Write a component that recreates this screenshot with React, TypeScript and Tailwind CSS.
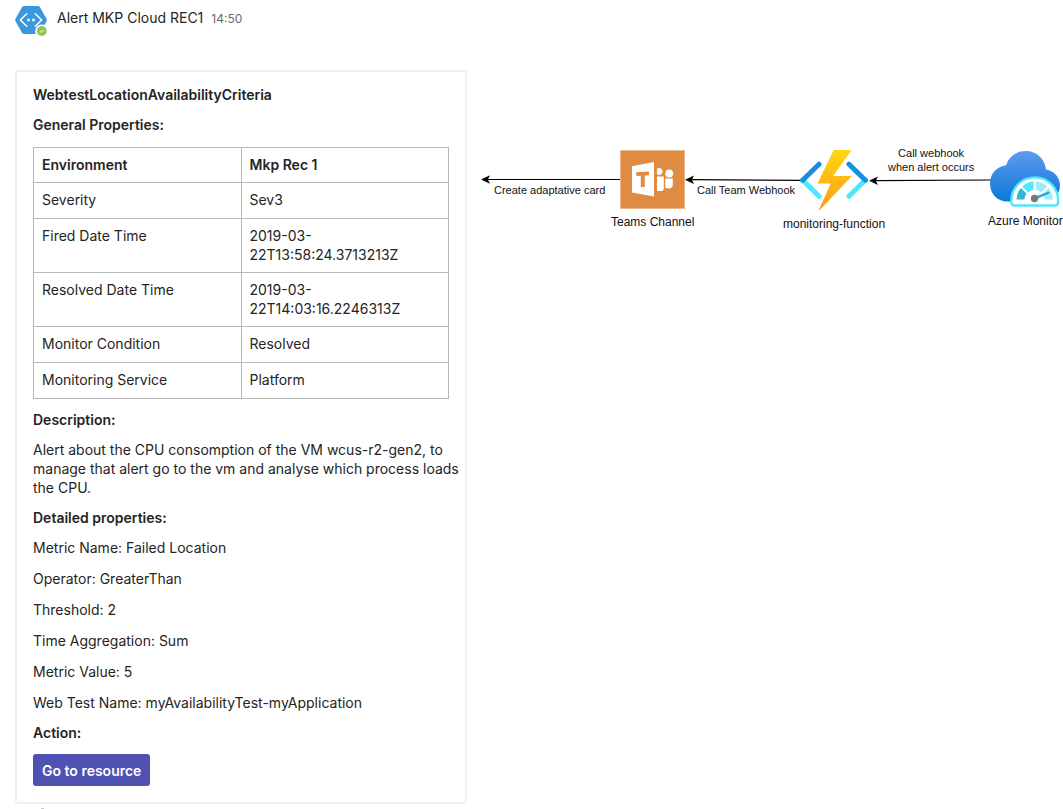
import React from "react";

const properties: [string, string][] = [
  ["Severity", "Sev3"],
  ["Fired Date Time", "2019-03-22T13:58:24.3713213Z"],
  ["Resolved Date Time", "2019-03-22T14:03:16.2246313Z"],
  ["Monitor Condition", "Resolved"],
  ["Monitoring Service", "Platform"],
];

const details: [string, string][] = [
  ["Metric Name", "Failed Location"],
  ["Operator", "GreaterThan"],
  ["Threshold", "2"],
  ["Time Aggregation", "Sum"],
  ["Metric Value", "5"],
  ["Web Test Name", "myAvailabilityTest-myApplication"],
];

function BotAvatar() {
  return (
    <svg className="h-8 w-8 shrink-0" viewBox="0 0 32 32" aria-hidden="true">
      <path
        d="M9 0h14q1.3 0 2 1.2l6.4 11.3q.8 1.5 0 3L25 26.8q-.7 1.2-2 1.2H9q-1.3 0-2-1.2L.6 15.5q-.8-1.5 0-3L7 1.2Q7.7 0 9 0Z"
        fill="#3a96dd"
      />
      <path
        d="M11.7 7.8 5.4 14l6.3 6.2M20.3 7.8l6.3 6.2-6.3 6.2"
        fill="none"
        stroke="#fff"
        strokeWidth="1.5"
        strokeLinecap="round"
      />
      <circle cx="13.5" cy="14" r="1.4" fill="#fff" />
      <circle cx="18.5" cy="14" r="1.4" fill="#fff" />
      <circle cx="26.8" cy="25" r="6.6" fill="#fff" />
      <circle cx="26.8" cy="25" r="4.9" fill="#92c353" />
      <path d="m24.9 25.1 1.3 1.3 2.5-2.6" fill="none" stroke="#fff" strokeWidth="1" />
    </svg>
  );
}

function TeamsIcon() {
  return (
    <svg className="h-[59px] w-[65px]" viewBox="0 0 65 59" aria-hidden="true">
      <rect x=".5" y=".5" width="64" height="58" fill="#df8c42" stroke="#ecb98c" />
      <path d="M12 16.2 34 12v34.5L12 42.4Z" fill="#fff" />
      <path d="M16.3 22.3 29 21.5v3.8l-4.2.2v11.6l-4-.2V25.7l-4.5.2Z" fill="#df8c42" />
      <path d="M37 18.8a3.4 3.4 0 1 1 0 5.4Z" fill="#fff" />
      <circle cx="49.2" cy="23.5" r="3.9" fill="#fff" />
      <path d="M37 26.5h6.8v11.4q0 3.2-3.4 3.2H37Z" fill="#fff" />
      <path d="M45.2 28.5h7.6v6.3q0 3.6-4 3.6-2.3 0-3.6-.6Z" fill="#fff" />
    </svg>
  );
}

function FunctionIcon() {
  return (
    <svg className="h-[60px] w-[68px]" viewBox="0 0 68 60" aria-hidden="true">
      <defs>
        <linearGradient id="bolt" x1="0" y1="0" x2="0" y2="1">
          <stop offset="0" stopColor="#fed70f" />
          <stop offset="1" stopColor="#fe9b1c" />
        </linearGradient>
      </defs>
      <g fill="none" strokeWidth="5" strokeLinejoin="round">
        <path d="M2.6 30 19 46.3M65.4 30 49 46.3" stroke="#50e6ff" strokeLinecap="round" />
        <path d="M19 14.2 2.6 30.2M49 14.2l16.4 16" stroke="#1490df" strokeLinecap="round" />
      </g>
      <path d="M34.4 0h16.2q1 0 .4 1L33 26h17.7q1 0 .3.9L20.2 59.4q-1.5 1.3-.8-.6L30.7 33.5H18.6q-1 0-.6-1L33.5.6q.3-.6.9-.6Z" fill="url(#bolt)" />
    </svg>
  );
}

function MonitorIcon() {
  return (
    <svg className="h-[57px] w-[70px]" viewBox="0 0 70 57" aria-hidden="true">
      <defs>
        <linearGradient id="cloud" x1="0" y1="0" x2="0" y2="1">
          <stop offset="0" stopColor="#5e9bee" />
          <stop offset="1" stopColor="#0b78d7" />
        </linearGradient>
      </defs>
      <path
        d="M18 50.6C7.5 50.6 0 42.6 0 32.4 0 22 6.8 15.8 16.2 14.2 18.6 5.6 26.4 0 35.8 0 46.6 0 55 7.8 56 18.6 64.2 20 70 26.4 70 34.6c0 9.2-7 16-16 16Z"
        fill="url(#cloud)"
      />
      <path
        d="M21.2 50.5C21.2 36.6 31.4 26.4 44.8 26.4s23.5 10.2 23.5 24.1q0 4-3.4 4H24.6q-3.4 0-3.4-4Z"
        fill="#fff"
        stroke="#50e6ff"
        strokeWidth="2.4"
      />
      <path d="M26.6 48.5a18 18 0 0 1 4.3-11.4l5.7 5.6a10 10 0 0 0-2.3 5.8Z" fill="#32b6d5" />
      <path d="M32.3 35.6A18 18 0 0 1 43.6 30.6v8.4a10 10 0 0 0-5.5 2.4Z" fill="#50e6ff" />
      <path d="M45.8 30.6a18 18 0 0 1 11.4 5l-5.9 5.8a10 10 0 0 0-5.5-2.4Z" fill="#9cebff" />
      <path d="M58.5 37.1a18 18 0 0 1 4.3 11.4H55a10 10 0 0 0-2.3-5.8Z" fill="#9cebff" />
      <path d="m44.5 46 14.8-5.6v2l-14 6Z" fill="#1aa4c8" />
      <circle cx="44.5" cy="47.5" r="3.7" fill="#76797c" />
    </svg>
  );
}

function Arrows() {
  return (
    <svg className="absolute left-0 top-[170px] h-5 w-[530px]" viewBox="0 0 530 20" aria-hidden="true">
      <g stroke="#000" strokeWidth="1.2">
        <path d="M19 9.5h135M224 9.7l111 .7M408 10.7l116-.7" />
      </g>
      <path d="m14 9.5 9-4.2-2.2 4.2 2.2 4.2Z" />
      <path d="m218 9.7 9-4.2-2.2 4.2 2.2 4.2Z" />
      <path d="m402 10.7 9-4.2-2.2 4.2 2.2 4.2Z" />
    </svg>
  );
}

function Flow() {
  return (
    <section
      aria-label="Alert flow"
      className="relative flex-1 overflow-hidden whitespace-nowrap text-[#111111]"
      style={{ fontFamily: '"Liberation Sans", Arial, sans-serif' }}
    >
      <Arrows />
      <p className="absolute left-[27px] top-[183px] text-[11px] leading-[14px]">Create adaptative card</p>
      <div className="absolute left-[144px] top-[150px] flex flex-col items-center gap-[5px]">
        <TeamsIcon />
        <p className="text-xs leading-4">Teams Channel</p>
      </div>
      <p className="absolute left-[230px] top-[183px] text-[11px] leading-[14px]">Call Team Webhook</p>
      <div className="absolute left-[316px] top-[150px] flex flex-col items-center gap-[6px]">
        <FunctionIcon />
        <p className="text-xs leading-4">monitoring-function</p>
      </div>
      <p className="absolute left-[421px] top-[146px] text-center text-[11px] leading-[14px]">
        Call webhook
        <br />
        when alert occurs
      </p>
      <div className="absolute left-[521px] top-[151px] flex flex-col items-center gap-[5px]">
        <MonitorIcon />
        <p className="text-xs leading-4">Azure Monitor</p>
      </div>
    </section>
  );
}

export default function App() {
  return (
    <main
      className="flex min-h-screen overflow-hidden bg-white text-sm text-[#252423]"
      style={{ fontFamily: 'Inter, "Liberation Sans", sans-serif' }}
    >
      <article className="ml-[15px] w-[452px] shrink-0 pt-[6px]">
        <header className="flex h-16 items-start gap-[10px]">
          <BotAvatar />
          <div className="flex items-baseline gap-2 pt-[2px]">
            <h1 className="leading-5">Alert MKP Cloud REC1</h1>
            <time className="text-xs text-[#6b6968]">14:50</time>
          </div>
        </header>

        <div className="flex flex-col gap-[11px] rounded-[3px] border-2 border-[#f0f0f0] px-4 pb-4 pt-[13px] leading-[19px]">
          <h2 className="font-semibold">WebtestLocationAvailabilityCriteria</h2>
          <h3 className="font-semibold">General Properties:</h3>
          <table className="mt-[2px] w-full table-fixed border-collapse text-left [&_td]:border [&_td]:border-[#b8b8b8] [&_td]:px-2 [&_td]:pb-2 [&_td]:pt-[7px] [&_td]:align-top [&_th]:border [&_th]:border-[#b8b8b8] [&_th]:px-2 [&_th]:pb-2 [&_th]:pt-[7px]">
            <thead>
              <tr>
                <th className="font-semibold">Environment</th>
                <th className="font-semibold">Mkp Rec 1</th>
              </tr>
            </thead>
            <tbody>
              {properties.map(([name, value]) => (
                <tr key={name} className="h-9">
                  <td>{name}</td>
                  <td>{value}</td>
                </tr>
              ))}
            </tbody>
          </table>
          <h3 className="font-semibold">Description:</h3>
          <p className="-mr-3">
            Alert about the CPU consomption of the VM wcus-r2-gen2, to
            <br />
            manage that alert go to the vm and analyse which process loads the CPU.
          </p>
          <h3 className="font-semibold">Detailed properties:</h3>
          <ul className="flex flex-col gap-3">
            {details.map(([name, value]) => (
              <li key={name}>
                {name}: {value}
              </li>
            ))}
          </ul>
          <h3 className="font-semibold">Action:</h3>
          <button
            type="button"
            className="mt-px h-8 self-start rounded-[3px] bg-[#4f52b2] px-[9px] font-semibold text-white"
          >
            Go to resource
          </button>
        </div>
        <div className="ml-[26px] mt-1 h-px w-[3px] bg-[#c5c6e6]" />
      </article>
      <Flow />
    </main>
  );
}
